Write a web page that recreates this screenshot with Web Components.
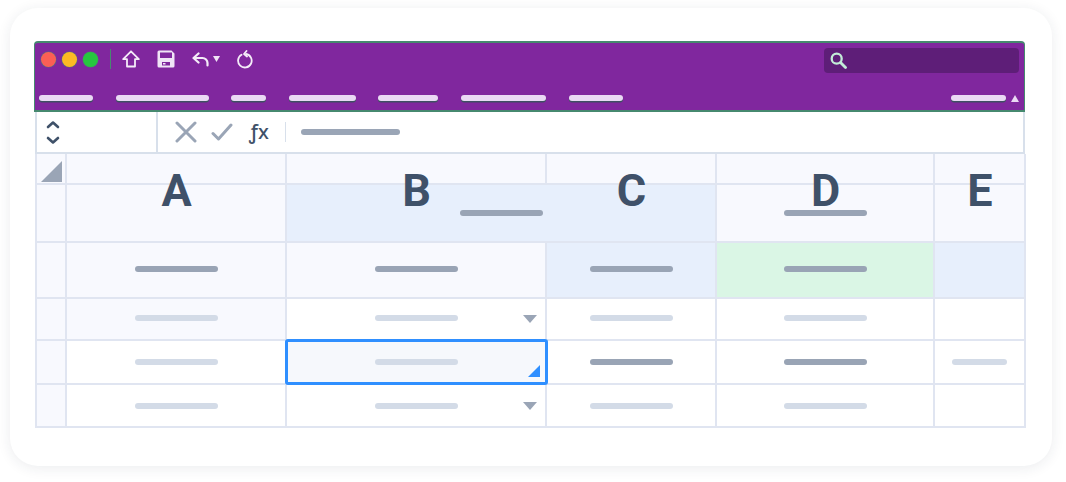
<!DOCTYPE html>
<html>
<head>
<meta charset="utf-8">
<title>Spreadsheet</title>
<style>
  html, body { margin: 0; background: #fff; }
  body { width: 1066px; height: 482px; overflow: hidden; font-family: Roboto, "Liberation Sans", sans-serif; }
</style>
</head>
<body>
<sheet-card>
  <sheet-window>
    <title-bar></title-bar>
    <menu-bar></menu-bar>
    <formula-bar></formula-bar>
    <sheet-grid></sheet-grid>
  </sheet-window>
</sheet-card>

<script>
class SheetCard extends HTMLElement {
    constructor() {
        super();
        this.attachShadow({ mode: 'open' }).innerHTML = `
        <style>
            :host {
                display: block;
                box-sizing: border-box;
                width: 1042px;
                height: 458px;
                margin: 8px 0 0 10px;
                padding: 33px 27px 0 24px;
                background: #fff;
                border-radius: 28px;
                box-shadow: 0 2px 14px rgba(30, 40, 70, 0.09);
            }
        </style>
        <slot></slot>`;
    }
}

class SheetWindow extends HTMLElement {
    constructor() {
        super();
        this.attachShadow({ mode: 'open' }).innerHTML = `
        <style>
            :host { display: block; width: 991px; }
        </style>
        <slot></slot>`;
    }
}

class TitleBar extends HTMLElement {
    constructor() {
        super();
        this.attachShadow({ mode: 'open' }).innerHTML = `
        <style>
            :host {
                display: flex;
                align-items: center;
                box-sizing: border-box;
                height: 36px;
                padding: 0 5px 2px 6px;
                background: #80279e;
                border: solid #46896f;
                border-width: 2px 1px 0 1px;
                border-radius: 4px 4px 0 0;
            }
            .dot { width: 15px; height: 15px; border-radius: 50%; margin-right: 6px; flex: none; box-shadow: 0 0 0 .5px rgba(70, 137, 111, .8); }
            .sep { width: 1px; height: 20px; background: #46896f; margin: 0 11px 0 6px; flex: none; }
            svg { display: block; flex: none; }
            .search {
                display: flex;
                align-items: center;
                box-sizing: border-box;
                width: 195px;
                height: 25px;
                margin-top: 3px;
                margin-left: auto;
                padding-left: 6px;
                background: #5e1e78;
                border-radius: 4px;
            }
        </style>
        <span class="dot" style="background:#fb5f55"></span>
        <span class="dot" style="background:#fdb924"></span>
        <span class="dot" style="background:#27c63f"></span>
        <span class="sep"></span>
        <svg width="18" height="18" viewBox="0 0 18 18" fill="none" stroke="#f4ecf8" stroke-width="1.800" stroke-linejoin="round" style="margin-right:17px">
            <path d="M9 1.300 1.200 9.200H5v7.300h8V9.200h3.800z"/>
        </svg>
        <svg width="18" height="18" viewBox="0 0 18 18" style="margin-right:17px">
            <path fill="#f0e4f6" d="M2 0.500h12.500l3 3V16a1.500 1.500 0 0 1-1.500 1.500H2A1.500 1.500 0 0 1 .5 16V2A1.500 1.500 0 0 1 2 .5z"/>
            <path fill="#80279e" d="M3 2.500h12v5.500H3z"/>
            <path fill="#80279e" d="M5 12h8v3.500H5z"/>
            <path fill="#f0e4f6" d="M6 13h2.500v1.500H6z"/>
        </svg>
        <svg width="17" height="15" viewBox="0 0 17 15" fill="none" stroke="#f4ecf8" stroke-width="2.200" stroke-linecap="round" stroke-linejoin="round" style="margin-right:4px">
            <path d="M6.500 1.500 1.500 6l5 4.500"/>
            <path d="M2 6h8.500a5 5 0 0 1 5 5v2.500"/>
        </svg>
        <svg width="7" height="6" viewBox="0 0 7 6" style="margin-right:16px"><path fill="#f0e4f6" d="M0 0h7L3.500 6z"/></svg>
        <svg width="17" height="19" viewBox="0 0 17 19" fill="none" stroke="#f4ecf8" stroke-width="1.800" stroke-linecap="round">
            <path d="M5.500 4.800a6.800 6.800 0 1 0 4.500-.8"/>
            <path d="M10.500 1 8 4l3 2.500" stroke-linejoin="round"/>
        </svg>
        <div class="search">
            <svg width="17" height="17" viewBox="0 0 17 17" fill="none" stroke="#c3ecd8" stroke-linecap="round">
                <circle cx="6.700" cy="6.700" r="5" stroke-width="2.300"/>
                <path d="M10.500 10.500 15.500 15.500" stroke-width="2.800"/>
            </svg>
        </div>`;
    }
}

class MenuBar extends HTMLElement {
    constructor() {
        super();
        const widths = [54, 93, 35, 67, 60, 85, 54];
        const items = widths.map(w => `<span class="pill" style="width:${w}px"></span>`).join('');
        this.attachShadow({ mode: 'open' }).innerHTML = `
        <style>
            :host {
                display: flex;
                align-items: center;
                gap: 22.600px;
                box-sizing: border-box;
                height: 35px;
                padding: 9px 5px 0 4px;
                background: #80279e;
                border: solid #46896f;
                border-width: 0 1px 2px 1px;
            }
            .pill {
                display: block;
                height: 6px;
                background: #ead9f4;
                border-radius: 3px;
                box-shadow: 0 1.500px 0 #3f4f63;
            }
            .end { display: flex; align-items: center; gap: 5px; margin-left: auto; }
            .tri { width: 0; height: 0; border: solid transparent; border-width: 0 4px 7px; border-bottom-color: #ead9f4; }
        </style>
        ${items}
        <div class="end"><span class="pill" style="width:55px"></span><span class="tri"></span></div>`;
    }
}

class FormulaBar extends HTMLElement {
    constructor() {
        super();
        this.attachShadow({ mode: 'open' }).innerHTML = `
        <style>
            :host {
                display: flex;
                align-items: center;
                box-sizing: border-box;
                width: 990px;
                height: 42px;
                margin-left: 1px;
                background: #fff;
                border: solid #d8e0eb;
                border-width: 0 2px 2px 2px;
            }
            .name { display: flex; align-items: center; box-sizing: border-box; width: 121px; height: 40px; padding-left: 9px; border-right: 2px solid #d8e0eb; flex: none; }
            svg { display: block; flex: none; }
            .fx { font: 500 20px/1 "Noto Sans", "DejaVu Sans", sans-serif; color: #3f5169; margin-left: 16px; width: 24px; flex: none; }
            .sep { width: 1px; height: 20px; background: #d8e0eb; margin: 0 15px 0 12px; flex: none; }
            .bar { width: 99px; height: 6px; border-radius: 3px; background: #9aa5b6; }
        </style>
        <div class="name">
            <svg width="14" height="25" viewBox="0 0 14 25" fill="none" stroke="#3f5169" stroke-width="2.600" stroke-linecap="round" stroke-linejoin="round">
                <path d="M2 7 7 2.500 12 7"/>
                <path d="M2 18l5 4.500 5-4.500"/>
            </svg>
        </div>
        <svg width="22" height="22" viewBox="0 0 22 22" fill="none" stroke="#9aa5b6" stroke-width="3" stroke-linecap="round" style="margin-left:17px">
            <path d="M2 2 20 20M20 2 2 20"/>
        </svg>
        <svg width="22" height="18" viewBox="0 0 22 18" fill="none" stroke="#9aa5b6" stroke-width="3" stroke-linecap="round" stroke-linejoin="round" style="margin-left:14px">
            <path d="M2 10.500 7.500 16 20 2"/>
        </svg>
        <span class="fx">ƒx</span>
        <span class="sep"></span>
        <span class="bar"></span>`;
    }
}

class SheetCell extends HTMLElement {
    constructor() {
        super();
        this.attachShadow({ mode: 'open' }).innerHTML = `
        <style>
            :host {
                display: flex;
                align-items: center;
                justify-content: center;
                position: relative;
                box-sizing: border-box;
                min-width: 0;
                border-right: 2px solid #e0e5f1;
                border-bottom: 2px solid #e0e5f1;
                background: var(--cell-bg, #fff);
            }
        </style>
        <slot></slot>`;
    }
}

class CellBar extends HTMLElement {
    constructor() {
        super();
        this.attachShadow({ mode: 'open' }).innerHTML = `
        <style>
            :host { display: block; width: 83px; height: 6px; border-radius: 3px; background: #d3dbe7; }
            :host([dark]) { background: #99a4b5; }
        </style>`;
    }
}

class SheetGrid extends HTMLElement {
    constructor() {
        super();
        const bar = (dark, w) => `<cell-bar ${dark ? 'dark' : ''} ${w ? `style="width:${w}px"` : ''}></cell-bar>`;
        const tint = '#f8f9fe', blue = '#e7effc', green = '#daf6e5';
        const up = 'padding-bottom:2px;';
        const cell = (content, bg, extra) => `<sheet-cell style="${bg ? `--cell-bg:${bg};` : ''}${extra || ''}">${content || ''}</sheet-cell>`;
        const drop = '<span class="drop"></span>';
        this.attachShadow({ mode: 'open' }).innerHTML = `
        <style>
            :host {
                display: grid;
                grid-template-columns: 30px 220px 260px 170px 218px 91px;
                grid-template-rows: 31px 58px 56px 42px 44px 43px;
                box-sizing: border-box;
                width: 991px;
                margin-left: 1px;
                border-left: 2px solid #e0e5f1;
            }
            .corner { width: 0; height: 0; border-style: solid; border-width: 0 0 21px 21px; border-color: transparent transparent #9aa5b6 transparent; position: absolute; right: 3px; bottom: 1px; }
            .letter { position: absolute; left: 1px; right: 0; top: 14px; text-align: center; font: 700 45px/1 Roboto, sans-serif; color: #3f5169; }
            .drop { position: absolute; right: 8px; top: calc(50% - 4px); width: 0; height: 0; border: solid transparent; border-width: 8px 7px 0; border-top-color: #9aa5b6; }
            .selected { position: absolute; inset: -2px -3px -2px -2px; box-sizing: border-box; border: 3px solid #2f8fff; border-radius: 3px; background: #f6f8fc; display: flex; align-items: center; justify-content: center; }
            .handle { position: absolute; right: 5px; bottom: 5px; width: 0; height: 0; border-style: solid; border-width: 0 0 12px 12px; border-color: transparent transparent #2f8fff transparent; }
        </style>
        ${cell('<span class="corner"></span>', tint)}
        ${['A', 'B', 'C', 'D', 'E'].map(l => cell(`<span class="letter">${l}</span>`, tint)).join('')}

        ${cell('', tint)}${cell('', tint)}
        ${cell(bar(true), blue, 'grid-column: span 2;')}
        ${cell(bar(true), tint)}${cell('', tint)}

        ${cell('', tint)}${cell(bar(true), tint, up)}${cell(bar(true), tint, up)}
        ${cell(bar(true), blue, up)}${cell(bar(true), green, up)}${cell('', blue)}

        ${cell('', tint)}${cell(bar(false), tint, up)}${cell(bar(false) + drop, null, up)}
        ${cell(bar(false), null, up)}${cell(bar(false), null, up)}${cell('')}

        ${cell('', tint)}${cell(bar(false))}
        ${cell(`<div class="selected">${bar(false)}<span class="handle"></span></div>`, null, 'z-index: 1;')}
        ${cell(bar(true))}${cell(bar(true))}${cell(bar(false, 55))}

        ${cell('', tint)}${cell(bar(false))}${cell(bar(false) + drop)}
        ${cell(bar(false))}${cell(bar(false))}${cell('')}`;
        // letters sit on top of the first data row
        this.shadowRoot.querySelectorAll('.letter').forEach(el => { el.parentElement.style.zIndex = 2; });
    }
}

customElements.define('sheet-card', SheetCard);
customElements.define('sheet-window', SheetWindow);
customElements.define('title-bar', TitleBar);
customElements.define('menu-bar', MenuBar);
customElements.define('formula-bar', FormulaBar);
customElements.define('sheet-cell', SheetCell);
customElements.define('cell-bar', CellBar);
customElements.define('sheet-grid', SheetGrid);
</script>
</body>
</html>
